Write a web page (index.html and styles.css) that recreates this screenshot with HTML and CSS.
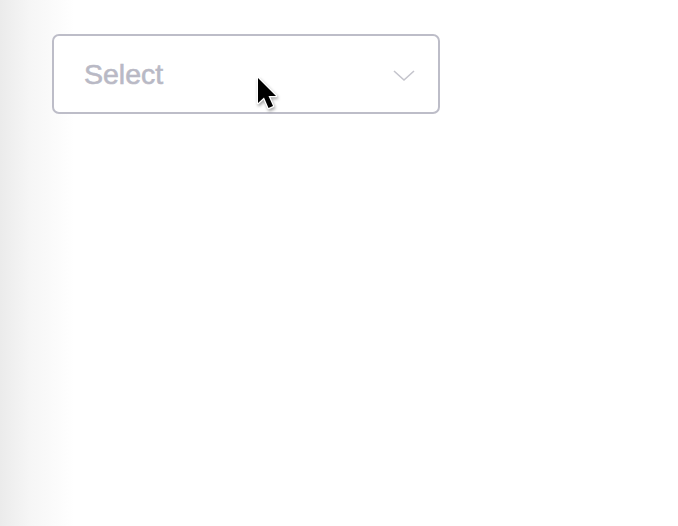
FILE: index.html
```html
<!DOCTYPE html>
<html>
<head>
<meta charset="utf-8">
<link rel="stylesheet" href="styles.css">
</head>
<body>
<div class="page">
  <div class="select">
    <span class="placeholder">Select</span>
    <svg class="chevron" width="24" height="14" viewBox="0 0 24 14"><path d="M2 3 L12 12 L22 3" fill="none" stroke="#c4c4cc" stroke-width="1.6"/></svg>
    <svg class="cursor" width="22" height="34" viewBox="0 0 22 34">
      <path d="M2 1 L2 26 L8 20.5 L12.5 31 L17 29 L12.5 19 L20 19 Z" fill="#fff" stroke="#fff" stroke-width="2.5" stroke-linejoin="round"/>
      <path d="M2 1 L2 26 L8 20.5 L12.5 31 L17 29 L12.5 19 L20 19 Z" fill="#000"/>
    </svg>
  </div>
</div>
</body>
</html>
```
FILE: styles.css
```css
html, body {
  margin: 0;
  height: 100%;
}
body {
  background: linear-gradient(to right, #ebebeb 0px, #f6f6f6 30px, #fcfcfc 60px, #fff 74px);
  font-family: "Liberation Sans", Arial, sans-serif;
}
.page {
  padding: 34px 0 0 52px;
}
.select {
  position: relative;
  box-sizing: border-box;
  width: 388px;
  height: 80px;
  border: 2px solid #bdbdc8;
  border-radius: 7px;
  background: #fff;
  display: flex;
  align-items: center;
  justify-content: space-between;
  padding: 0 22px 0 30px;
}
.placeholder {
  font-size: 28.5px;
  color: #b9b9c5;
  -webkit-text-stroke: 0.6px #b9b9c5;
  padding-top: 1px;
}
.chevron {
  display: block;
  margin-top: 1px;
}
.cursor {
  position: absolute;
  left: 202px;
  top: 41px;
  filter: drop-shadow(1px 2px 1.5px rgba(0,0,0,0.35));
}
```
